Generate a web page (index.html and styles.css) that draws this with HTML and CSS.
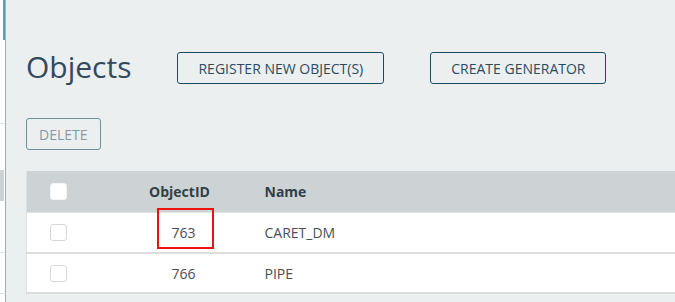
FILE: index.html
```html
<!DOCTYPE html>
<html>
  <head>
    <meta charset="utf-8" />
    <title>Objects</title>
    <link rel="stylesheet" href="styles.css">
  </head>
  <body>
    <div id="container">
      <!-- edge of the neighbouring panel -->
      <div class="side-strip">
        <div class="side-accent"></div>
        <div class="side-tick tick-a"></div>
        <div class="side-head"></div>
        <div class="side-tick tick-b"></div>
        <div class="side-tick tick-c"></div>
      </div>

      <div class="main">
        <div class="title-row">
          <h1>Objects</h1>
          <button class="btn">REGISTER NEW OBJECT(S)</button>
          <button class="btn">CREATE GENERATOR</button>
        </div>

        <div class="actions">
          <button class="btn btn-disabled">DELETE</button>
        </div>

        <table class="objects">
          <thead>
            <tr>
              <th class="col-check"><span class="check check-head"></span></th>
              <th class="col-id">ObjectID</th>
              <th class="col-name">Name</th>
            </tr>
          </thead>
          <tbody>
            <tr>
              <td class="col-check"><span class="check"></span></td>
              <td class="col-id">763<span class="highlight"></span></td>
              <td class="col-name">CARET_DM</td>
            </tr>
            <tr>
              <td class="col-check"><span class="check"></span></td>
              <td class="col-id">766</td>
              <td class="col-name">PIPE</td>
            </tr>
          </tbody>
        </table>
      </div>
    </div>
  </body>
</html>
```

FILE: styles.css
```css
body,
html {
  margin: 0;
  padding: 0;
  height: 100%;
  width: 100%;
  overflow: hidden;
}

body {
  font-family: "Open Sans", "Liberation Sans", sans-serif;
  background: #ebeff0;
}

#container {
  display: flex;
  height: 100vh;
}

/* Left strip */
.side-strip {
  position: relative;
  width: 5px;
  flex: none;
  background: #ffffff;
  border-right: 1px solid #9fb0b8;
}

.side-accent {
  position: absolute;
  top: 0;
  left: 3px;
  width: 2px;
  height: 40px;
  background: #5d9dac;
}

.side-head {
  position: absolute;
  top: 170px;
  left: 0;
  width: 4px;
  height: 31px;
  background: #cdd2d5;
}

.side-tick {
  position: absolute;
  left: 0;
  width: 4px;
  height: 1px;
  background: #dcdfe1;
}

.tick-a { top: 123px; }
.tick-b { top: 252px; }
.tick-c { top: 293px; }

/* Main area */
.main {
  flex: 1;
  padding: 0 0 0 20px;
  min-width: 0;
}

.title-row {
  display: flex;
  align-items: center;
  height: 32px;
  margin-top: 52px;
}

h1 {
  margin: 0 46px 0 0;
  font-size: 30px;
  font-weight: 400;
  color: #34495a;
  line-height: 32px;
  padding-bottom: 2px;
}

.btn {
  height: 32px;
  padding: 0 20px;
  margin-right: 46px;
  background: transparent;
  border: 1px solid #1d4a5e;
  border-radius: 3px;
  font-family: "Open Sans", "Liberation Sans", sans-serif;
  font-size: 14px;
  color: #2b4b5e;
  cursor: pointer;
}

.actions {
  margin-top: 34px;
}

.btn-disabled {
  padding: 0 12px;
  margin: 0;
  border-color: #6f8f9a;
  color: #8798a2;
}

/* Table */
.objects {
  margin-top: 21px;
  width: 100%;
  border-collapse: collapse;
  table-layout: fixed;
  border-left: 1px solid #dde1e3;
}

.objects th,
.objects td {
  box-sizing: border-box;
  padding: 0;
  font-size: 14px;
}

.objects th {
  height: 41px;
  background: #cdd2d5;
  font-weight: 700;
  color: #333e46;
  border-bottom: 1px solid #dfe3e5;
}

.objects td {
  height: 41px;
  background: #ffffff;
  color: #4a5057;
  border-bottom: 2px solid #dddddd;
}

.objects tbody tr:last-child td {
  height: 40px;
}

.col-check {
  width: 100px;
  text-align: left;
}

.col-check .check {
  margin-left: 23px;
}

.objects .col-id {
  width: 114px;
  text-align: center;
}

.objects th.col-id {
  padding-right: 8px;
}

td.col-id {
  position: relative;
}

.objects .col-name {
  text-align: left;
  padding-left: 24px;
}

.check {
  display: block;
  width: 15px;
  height: 15px;
  border: 1px solid #d8d8d8;
  border-radius: 3px;
  background: #ffffff;
}

.check-head {
  border-color: #f4f4f4;
}

/* Annotation box */
.highlight {
  position: absolute;
  left: 30px;
  top: -5px;
  width: 53px;
  height: 37px;
  border: 2px solid #ee1111;
}
```
